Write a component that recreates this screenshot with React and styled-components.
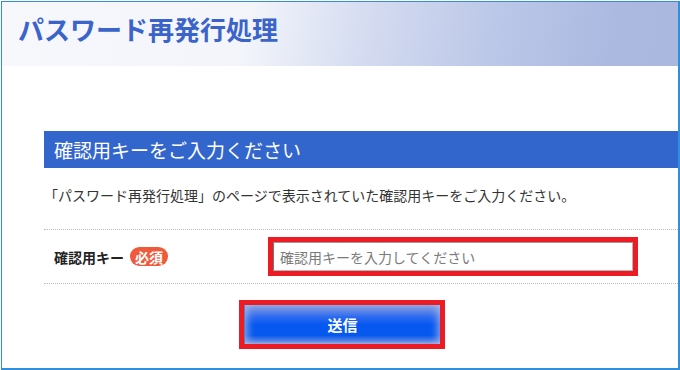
import React from "react";
import styled, { createGlobalStyle } from "styled-components";

const Global = createGlobalStyle`
  html, body { margin: 0; padding: 0; background: #fff; }
  body { font-family: "Noto Sans CJK JP", "Noto Sans", sans-serif; color: #333; }
  * { box-sizing: border-box; }
`;

const Frame = styled.div`
  margin: 1px 0 0 1px;
  width: 679px;
  height: 369px;
  border-style: solid;
  border-color: #2f8fdf;
  border-width: 1px 2px 2px 1px;
  background: #fff;
  overflow: hidden;
`;

const Header = styled.header`
  height: 64px;
  padding: 9px 0 0 16px;
  background: linear-gradient(100deg, #f6f8fc 0%, #f3f5fb 36%, #d3daf0 55%, #bcc8e8 72%, #abb9e1 90%, #aab8e0 100%);
`;

const Title = styled.h1`
  margin: 0;
  font-size: 26px;
  line-height: 36px;
  font-weight: 700;
  color: #3b64cb;
`;

const Content = styled.main`
  padding: 65px 0 0 42px;
`;

const SectionBar = styled.h2`
  margin: 0;
  height: 37px;
  padding-left: 10px;
  background: #3366cc;
  color: #fff;
  font-size: 19px;
  font-weight: 400;
  line-height: 37px;
`;

const Desc = styled.p`
  margin: 17px 0 24px;
  font-size: 14px;
  line-height: 20px;
  color: #333;
`;

const FormRow = styled.div`
  display: flex;
  align-items: center;
  padding: 7px 0;
  border-top: 1px dotted #bdbdbd;
  border-bottom: 1px dotted #bdbdbd;
`;

const Label = styled.label`
  width: 224px;
  padding-left: 10px;
  display: flex;
  align-items: center;
  gap: 6px;
  font-size: 14px;
  font-weight: 700;
  color: #222;
`;

const Badge = styled.span`
  display: inline-flex;
  align-items: center;
  justify-content: center;
  width: 38px;
  height: 19px;
  border-radius: 10px;
  background: #ef5a3b;
  color: #fff;
  font-size: 14px;
  font-weight: 700;
  line-height: 1;
`;

const Highlight = styled.div`
  display: inline-flex;
  border: 5px solid #ed1c24;
`;

const Input = styled.input`
  width: 360px;
  height: 29px;
  margin: 0;
  padding: 0 6px;
  border: 1px solid #b5b5b5;
  border-left-color: #777;
  border-top-color: #999;
  font-family: inherit;
  font-size: 14px;
  color: #333;
  background: #fff;
  outline: none;
  &::placeholder { color: #7a7a7a; }
`;

const ButtonRow = styled.div`
  padding: 16px 0 0 195px;
`;

const SubmitButton = styled.button`
  width: 196px;
  height: 39px;
  margin: 0;
  padding: 0;
  border: none;
  border-left: 1px solid #5a7fb8;
  font-family: inherit;
  font-size: 15px;
  font-weight: 700;
  color: #fff;
  cursor: pointer;
  background: linear-gradient(to bottom, #8ea6e2 0%, #6a8ce6 12%, #2d6bef 30%, #0657f0 50%, #0658ee 78%, #4a7be6 90%, #95a9e0 100%);
  box-shadow: inset 8px 0 8px -6px rgba(180, 195, 235, 0.8), inset -8px 0 8px -6px rgba(180, 195, 235, 0.8);
`;

export default function App() {
  return (
    <>
      <Global />
      <Frame>
        <Header>
          <Title>パスワード再発行処理</Title>
        </Header>
        <Content>
          <SectionBar>確認用キーをご入力ください</SectionBar>
          <Desc>「パスワード再発行処理」のページで表示されていた確認用キーをご入力ください。</Desc>
          <FormRow>
            <Label htmlFor="key">
              確認用キー<Badge>必須</Badge>
            </Label>
            <Highlight>
              <Input id="key" placeholder="確認用キーを入力してください" />
            </Highlight>
          </FormRow>
          <ButtonRow>
            <Highlight>
              <SubmitButton type="button">送信</SubmitButton>
            </Highlight>
          </ButtonRow>
        </Content>
      </Frame>
    </>
  );
}
